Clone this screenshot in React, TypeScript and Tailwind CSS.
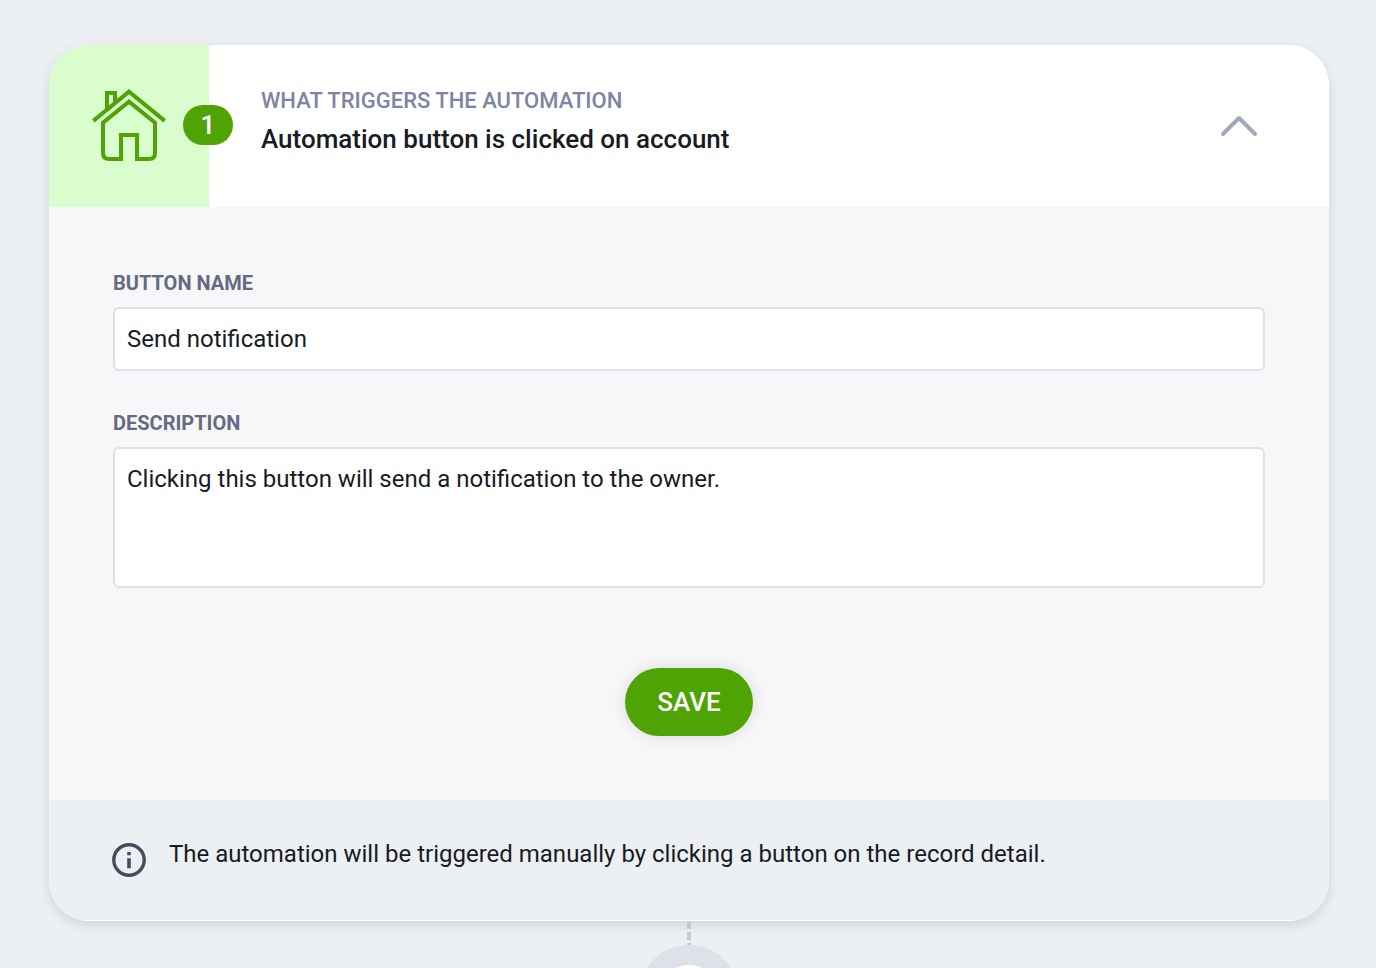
import { useState } from "react";

function HouseIcon() {
  return (
    <svg viewBox="0 0 76 76" fill="none" stroke="currentColor" strokeWidth="4" className="size-[76px]" aria-hidden="true">
      <path d="M2.3 32.9 38 3.6l35.7 29.3" />
      <path d="M16 21V5h8v10" />
      <path d="M46 69V47H30v24H18q-6 0-6-6V34.8L38 13.6l26 21.2V65q0 6-6 6H46V67" />
    </svg>
  );
}

function ChevronUpIcon() {
  return (
    <svg viewBox="0 0 40 24" fill="none" stroke="currentColor" strokeWidth="4" strokeLinecap="round" strokeLinejoin="round" className="h-6 w-10" aria-hidden="true">
      <path d="M4 20 20 4l16 16" />
    </svg>
  );
}

function InfoIcon() {
  return (
    <svg viewBox="0 0 34 34" fill="none" className="size-[34px] shrink-0 text-[#464b5e]" aria-hidden="true">
      <circle cx="17" cy="17" r="15.2" stroke="currentColor" strokeWidth="3.4" />
      <path d="M15.2 9h3.6v3.2h-3.6zM15.2 15.2h3.6v10h-3.6z" fill="currentColor" />
    </svg>
  );
}

export default function App() {
  const [open, setOpen] = useState(true);
  const [name, setName] = useState("Send notification");
  const [description, setDescription] = useState("Clicking this button will send a notification to the owner.");

  return (
    <main className="flex h-screen flex-col overflow-hidden bg-[#ecf0f3] pt-[45px] pr-[47px] pl-[49px] font-[Roboto,sans-serif] text-[#181b24]">
      <section className="shrink-0 overflow-hidden rounded-[40px] bg-[#f7f7f9] shadow-[0_4px_12px_rgba(0,0,0,0.12)]">
        <header className="flex h-[162px] bg-white">
          <div className="relative flex w-40 shrink-0 items-center justify-center bg-[#d9fdcc] text-[#4fa305]">
            <HouseIcon />
            <span className="absolute top-[60px] -right-6 flex h-10 w-[50px] items-center justify-center rounded-full bg-[#4fa305] text-[26px] font-medium text-white">
              1
            </span>
          </div>
          <div className="flex-1 pt-10 pl-[52px]">
            <p className="text-[22px] leading-8 font-medium text-[#7c86a2]">WHAT TRIGGERS THE AUTOMATION</p>
            <h1 className="mt-1 text-[26px] leading-9 font-medium">Automation button is clicked on account</h1>
          </div>
          <button
            type="button"
            aria-label="Toggle trigger details"
            aria-expanded={open}
            onClick={() => setOpen(!open)}
            className="mr-[70px] self-center text-[#a2a9bf]"
          >
            <ChevronUpIcon />
          </button>
        </header>

        {open && (
          <form className="flex flex-col px-16 pt-16 pb-16" onSubmit={(e) => e.preventDefault()}>
            <label htmlFor="button-name" className="text-[20px] leading-6 font-bold text-[#636b83]">
              BUTTON NAME
            </label>
            <input
              id="button-name"
              value={name}
              onChange={(e) => setName(e.target.value)}
              className="mt-3 h-16 w-full rounded-md border-2 border-[#dee1e9] bg-white px-3 text-2xl outline-none focus:border-[#4fa305]"
            />
            <label htmlFor="description" className="mt-10 text-[20px] leading-6 font-bold text-[#636b83]">
              DESCRIPTION
            </label>
            <textarea
              id="description"
              value={description}
              onChange={(e) => setDescription(e.target.value)}
              className="mt-3 h-[141px] w-full resize-none rounded-md border-2 border-[#dee1e9] bg-white px-3 py-3.5 text-2xl outline-none focus:border-[#4fa305]"
            />
            <button
              type="submit"
              className="mt-20 h-[68px] self-center rounded-full bg-[#4fa305] px-8 text-[26px] font-medium text-white shadow-[0_0_16px_rgba(0,0,0,0.12)]"
            >
              SAVE
            </button>
          </form>
        )}

        <footer className="flex h-[121px] items-start gap-[23px] border-b border-white bg-[#ecf0f3] px-[63px] pt-9">
          <span className="pt-[7px]">
            <InfoIcon />
          </span>
          <p className="text-2xl leading-9">The automation will be triggered manually by clicking a button on the record detail.</p>
        </footer>
      </section>

      <div className="flex shrink-0 flex-col items-center" aria-hidden="true">
        <svg viewBox="0 0 4 24" className="h-6 w-1 text-[#c5c7d8]">
          <path d="M2 0v24" stroke="currentColor" strokeWidth="4" strokeDasharray="8 3" />
        </svg>
        <div className="size-[100px] rounded-full border-20 border-[#dee1e9] bg-white" />
      </div>
    </main>
  );
}
